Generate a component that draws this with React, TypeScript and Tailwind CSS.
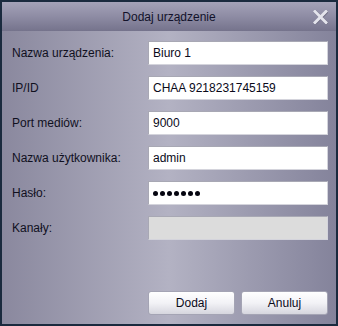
import React from "react";

const font = { fontFamily: '"Liberation Sans", Arial, sans-serif' };

function Field({ value, disabled, password }: { value?: string; disabled?: boolean; password?: boolean }) {
  return (
    <div
      className={`h-[24px] w-[180px] flex items-center pl-[4px] border border-[#d4d4dc] border-t-[#a8a8b4] border-l-[#a8a8b4] ${
        disabled ? "bg-[#dcdcdc]" : "bg-white"
      }`}
    >
      {password ? (
        <div className="flex gap-[2px]">
          {Array.from({ length: 7 }).map((_, i) => (
            <span key={i} className="block w-[5px] h-[5px] rounded-full bg-[#050510]" />
          ))}
        </div>
      ) : (
        <span className="text-[12px] text-[#0a0a1a] leading-none">{value}</span>
      )}
    </div>
  );
}

function Btn({ children }: { children: React.ReactNode }) {
  return (
    <button className="h-[24px] w-[87px] rounded-[3px] border border-[#a4a4b4] bg-gradient-to-b from-[#ffffff] via-[#f2f2f6] to-[#d6d6de] text-[12px] text-[#0a0a1a] flex items-center justify-center">
      {children}
    </button>
  );
}

export default function App() {
  const rows: { label: string; value?: string; disabled?: boolean; password?: boolean }[] = [
    { label: "Nazwa urządzenia:", value: "Biuro 1" },
    { label: "IP/ID", value: "CHAA 9218231745159" },
    { label: "Port mediów:", value: "9000" },
    { label: "Nazwa użytkownika:", value: "admin" },
    { label: "Hasło:", password: true },
    { label: "Kanały:", disabled: true },
  ];
  return (
    <div style={font} className="w-[338px] h-[326px] border-2 border-[#1a2a3e] flex flex-col overflow-hidden">
      <div className="h-[29px] shrink-0 grid grid-cols-[1fr_auto_1fr] items-center bg-gradient-to-b from-[#a4a2b8] via-[#8e8ca4] to-[#75738c]">
        <div />
        <div className="text-[12px] text-[#12122a] pt-[1px]">Dodaj urządzenie</div>
        <div className="flex justify-end pr-[8px]">
          <svg width="15" height="14" viewBox="0 0 15 14">
            <path d="M2 1.5 L13 12.5 M13 1.5 L2 12.5" stroke="#6a687e" strokeWidth="3.2" strokeLinecap="square" transform="translate(0.5,0.5)" />
            <path d="M2 1.5 L13 12.5 M13 1.5 L2 12.5" stroke="#e4e4ec" strokeWidth="3" strokeLinecap="square" />
          </svg>
        </div>
      </div>
      <div className="flex-1 flex flex-col bg-gradient-to-r from-[#8a889e] via-[#b3b2c3] to-[#84839b] pl-[10px] pr-[8px] pt-[10px] pb-[9px]">
        <div className="grid grid-cols-[136px_180px] gap-y-[11px]">
          {rows.map((r) => (
            <React.Fragment key={r.label}>
              <div className="h-[24px] flex items-center text-[12px] text-[#10101e]">{r.label}</div>
              <Field value={r.value} disabled={r.disabled} password={r.password} />
            </React.Fragment>
          ))}
        </div>
        <div className="mt-auto flex justify-end gap-[6px]">
          <Btn>Dodaj</Btn>
          <Btn>Anuluj</Btn>
        </div>
      </div>
    </div>
  );
}
